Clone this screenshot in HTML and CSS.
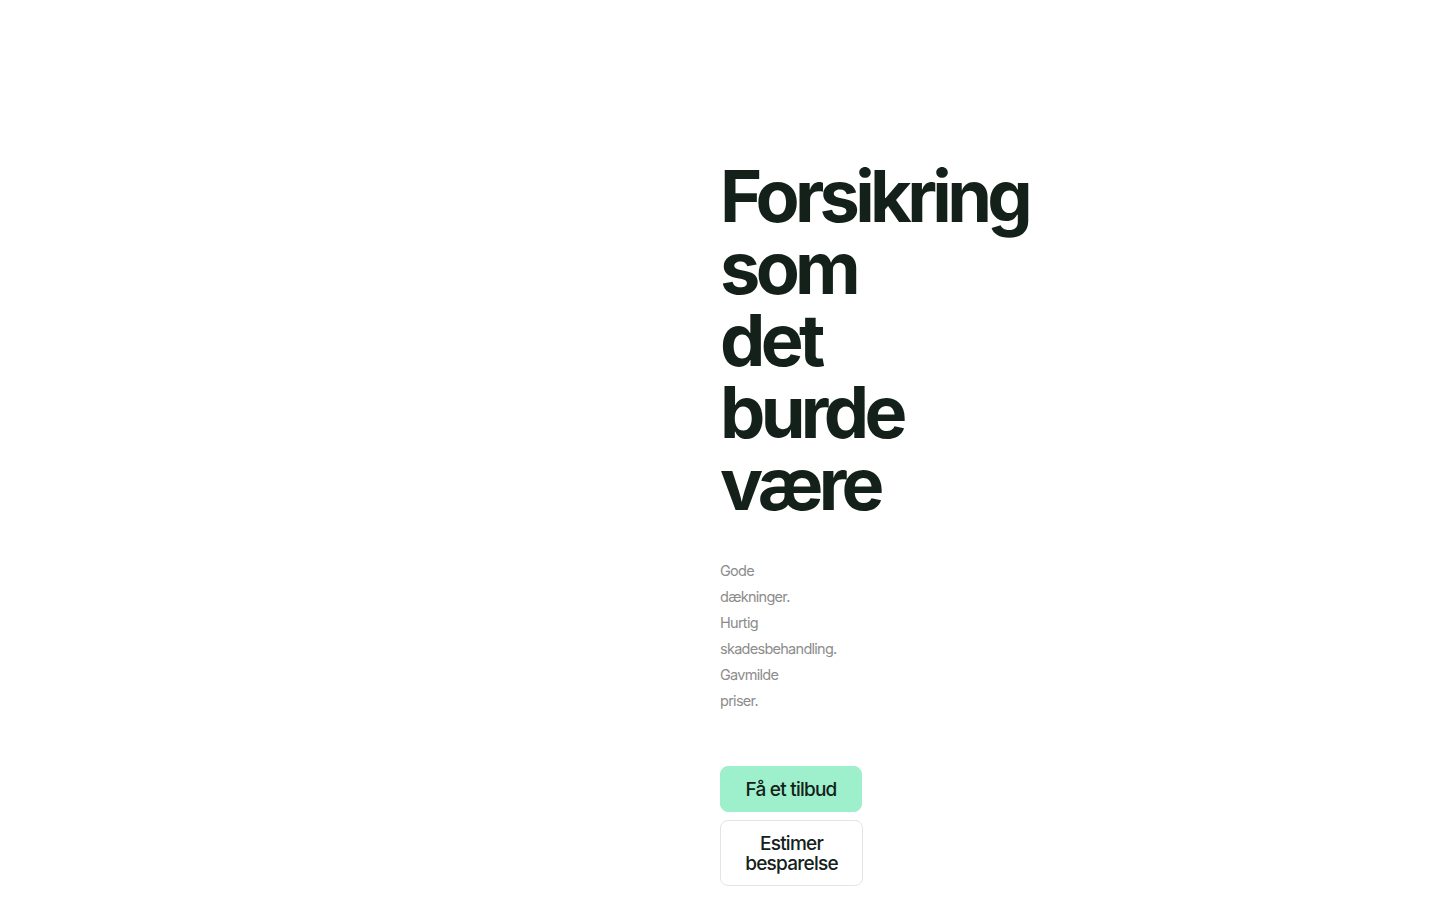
FILE: index.html
```html
<!DOCTYPE html>
<html lang="da">
<head>
<meta charset="utf-8">
<title>Forsikring som det burde være</title>
<link rel="stylesheet" href="styles.css">
</head>
<body>
<main class="hero">
  <div class="hero-media"></div>
  <div class="hero-content">
    <h1 class="hero-title">Forsikring som det burde være</h1>
    <p class="hero-lead">Gode dækninger. Hurtig skadesbehandling. Gavmilde priser.</p>
    <div class="hero-actions">
      <a class="btn btn-primary" href="#">Få et tilbud</a>
      <a class="btn btn-secondary" href="#">Estimer besparelse</a>
    </div>
  </div>
</main>
</body>
</html>
```

FILE: styles.css
```css
* { box-sizing: border-box; }
html, body { margin: 0; padding: 0; background: #ffffff; }
body {
  font-family: Inter, "Noto Sans", Arial, sans-serif;
  color: #14211b;
}
.hero {
  display: grid;
  grid-template-columns: 720px 1fr;
  padding-top: 160px;
  min-height: 900px;
}
.hero-content {
  display: flex;
  flex-direction: column;
  align-items: flex-start;
}
.hero-title {
  margin: 0;
  width: 0;
  font-size: 72px;
  line-height: 72px;
  font-weight: 700;
  letter-spacing: -0.065em;
  color: #14211b;
}
.hero-lead {
  margin: 38px 0 0;
  width: 0;
  font-size: 14.5px;
  line-height: 26px;
  letter-spacing: -0.05em;
  color: #8c8c8c;
}
.hero-actions {
  margin-top: 52px;
  display: flex;
  flex-direction: column;
  gap: 8px;
}
.btn {
  display: block;
  width: 143px;
  padding: 13px 20px 11px;
  border-radius: 8px;
  font-size: 19px;
  line-height: 20px;
  font-weight: 500;
  letter-spacing: -0.04em;
  text-align: center;
  text-decoration: none;
  color: #14211b;
}
.btn-primary {
  background: #9ef0cc;
  border: 1px solid #9ef0cc;
  width: 142px;
}
.btn-secondary {
  background: #ffffff;
  border: 1px solid #e4e4e4;
}
```
